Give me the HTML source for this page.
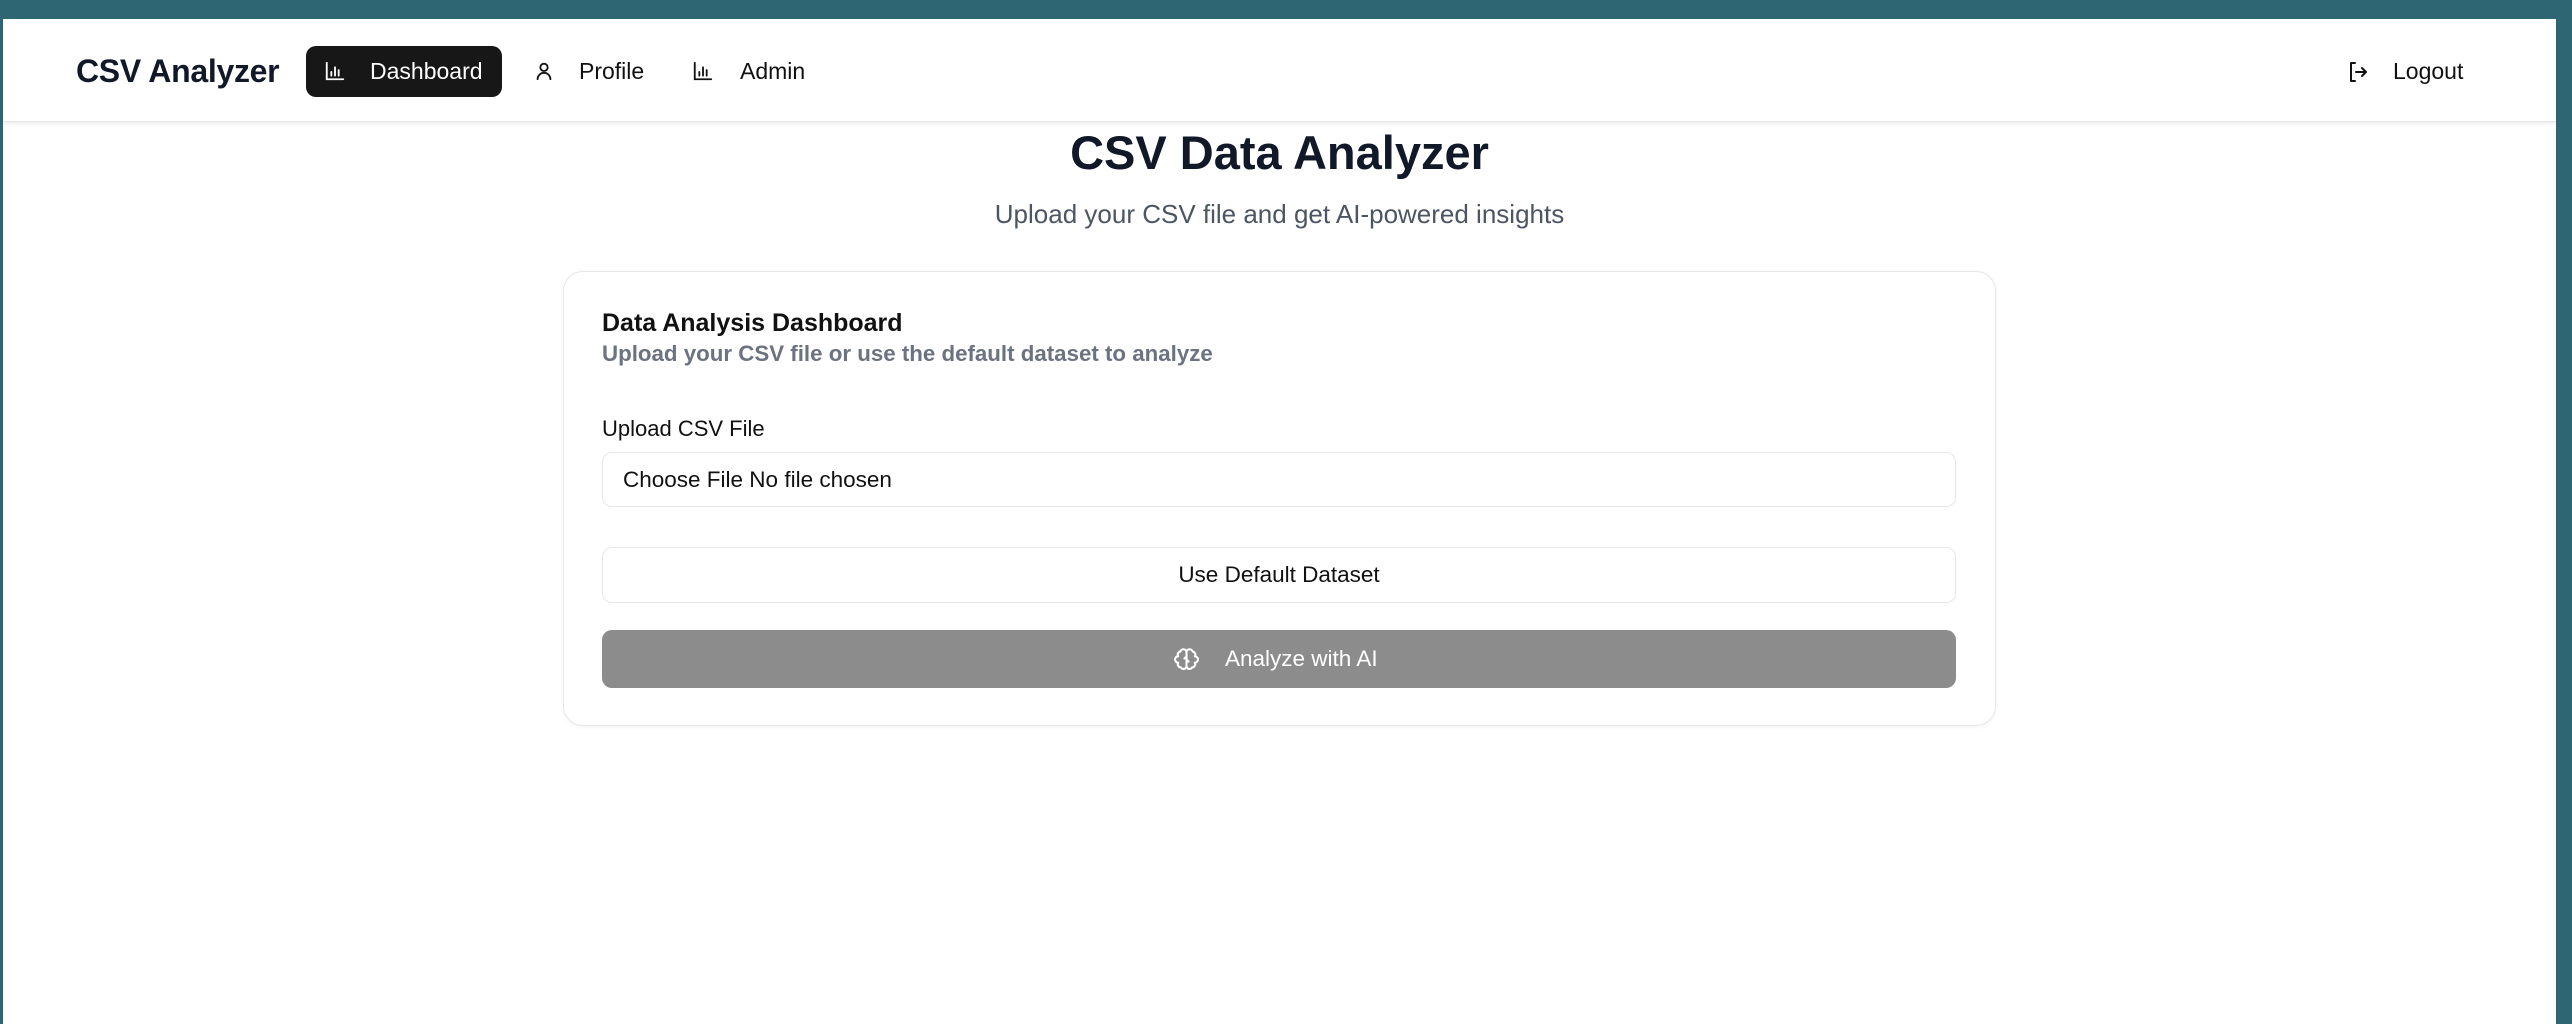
<!DOCTYPE html>
<html><head><meta charset="utf-8"><style>
*{box-sizing:border-box;margin:0;padding:0}
html,body{width:2572px;height:1024px;overflow:hidden}
body{background:#2e6673;font-family:"Liberation Sans",sans-serif;color:#111827;position:relative}
.page{position:absolute;left:3px;top:19px;width:2553px;height:1005px;background:#fff}
.hdr{position:absolute;left:0;top:0;width:100%;height:103px;background:#fff;box-shadow:0 2px 4px rgba(0,0,0,.08);border-bottom:1px solid #e5e7eb}
.abs{position:absolute;white-space:nowrap}
.logo{left:73px;top:34px;font-size:32px;font-weight:bold;color:#111827;letter-spacing:-.3px}
.pill{left:303px;top:27px;width:196px;height:51px;background:#171717;border-radius:10px}
.nav{font-size:23px;color:#111;top:39px}
svg{position:absolute}
.title{left:0;width:2553px;text-align:center;top:106px;font-size:47px;font-weight:bold;color:#111827}
.sub{left:0;width:2553px;text-align:center;top:180px;font-size:26px;color:#4b5563}
.card{left:560px;top:252px;width:1433px;height:455px;border:1.5px solid #e5e7eb;border-radius:20px;box-shadow:0 1px 4px rgba(0,0,0,.06)}
.h{left:599px;top:290px;font-size:25px;font-weight:bold;color:#111}
.d{left:599px;top:322px;font-size:22.3px;font-weight:bold;color:#6b7280}
.lab{left:599px;top:397px;font-size:22px;color:#111}
.inp{left:599px;top:433px;width:1354px;height:55px;border:1.5px solid #e5e7eb;border-radius:10px}
.inp span{position:absolute;left:20px;top:14px;font-size:22.5px;color:#111}
.btn{left:599px;top:528px;width:1354px;height:56px;border:1.5px solid #e5e7eb;border-radius:10px;text-align:center;line-height:54px;font-size:22.5px;color:#111}
.ai{left:599px;top:611px;width:1354px;height:58px;background:#8c8c8c;border-radius:10px}
</style></head><body>
<div class="page">
 <div class="hdr">
  <div class="abs logo">CSV Analyzer</div>
  <div class="abs pill"></div>
  <svg style="left:321px;top:41px" width="22" height="22" viewBox="0 0 24 24" fill="none" stroke="#fff" stroke-width="2" stroke-linecap="round"><path d="M3 3v18h18M8 17v-4M12 17V8M16 17v-6"/></svg>
  <div class="abs nav" style="left:367px;color:#fff">Dashboard</div>
  <svg style="left:530px;top:41px" width="22" height="22" viewBox="0 0 24 24" fill="none" stroke="#111" stroke-width="2" stroke-linecap="round"><circle cx="12" cy="8" r="4"/><path d="M5 21a7 7 0 0 1 14 0"/></svg>
  <div class="abs nav" style="left:576px">Profile</div>
  <svg style="left:689px;top:41px" width="22" height="22" viewBox="0 0 24 24" fill="none" stroke="#111" stroke-width="2" stroke-linecap="round"><path d="M3 3v18h18M8 17v-4M12 17V8M16 17v-6"/></svg>
  <div class="abs nav" style="left:737px">Admin</div>
  <svg style="left:2343px;top:41px" width="24" height="24" viewBox="0 0 24 24" fill="none" stroke="#111" stroke-width="2" stroke-linecap="round" stroke-linejoin="round"><path d="M9 3H5v18h4M10 12h10M16 8l4 4-4 4"/></svg>
  <div class="abs nav" style="left:2390px">Logout</div>
 </div>
 <div class="abs title">CSV Data Analyzer</div>
 <div class="abs sub">Upload your CSV file and get AI-powered insights</div>
 <div class="abs card"></div>
 <div class="abs h">Data Analysis Dashboard</div>
 <div class="abs d">Upload your CSV file or use the default dataset to analyze</div>
 <div class="abs lab">Upload CSV File</div>
 <div class="abs inp"><span>Choose File No file chosen</span></div>
 <div class="abs btn">Use Default Dataset</div>
 <div class="abs ai">
  <svg style="left:572px;top:17px" width="25" height="25" viewBox="0 0 24 24" fill="none" stroke="#fff" stroke-width="2" stroke-linecap="round" stroke-linejoin="round"><path d="M12 5a3 3 0 0 0-5.9-.6A3 3 0 0 0 4 9a3 3 0 0 0 0 6 3 3 0 0 0 2.5 4.5A3 3 0 0 0 12 19zM12 5a3 3 0 0 1 5.9-.6A3 3 0 0 1 20 9a3 3 0 0 1 0 6 3 3 0 0 1-2.5 4.5A3 3 0 0 1 12 19zM12 9l-2 2M12 12l2 2"/></svg>
  <div class="abs" style="left:623px;top:16px;font-size:22.5px;color:#fff">Analyze with AI</div>
 </div>
</div>
</body></html>
